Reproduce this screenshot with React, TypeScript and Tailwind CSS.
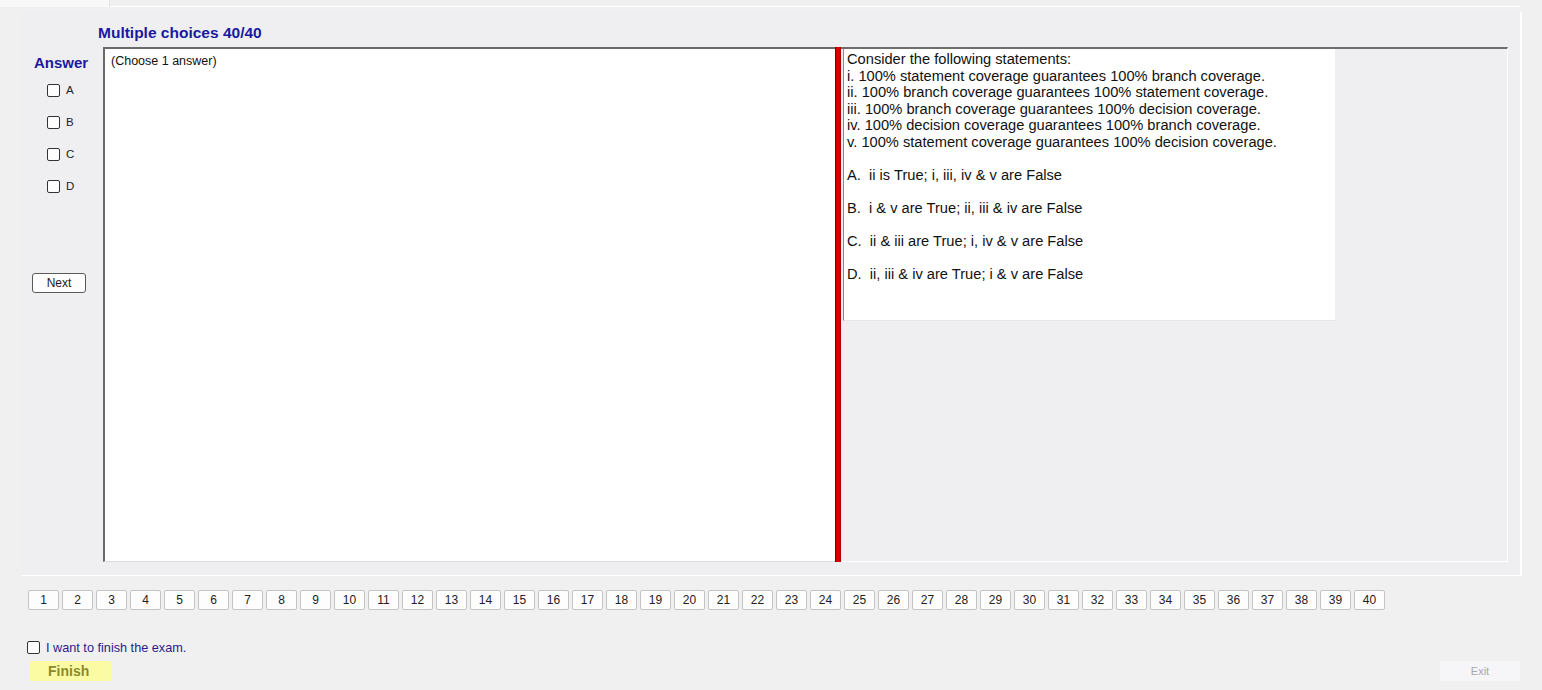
import React from "react";

const statements = [
  "Consider the following statements:",
  "i. 100% statement coverage guarantees 100% branch coverage.",
  "ii. 100% branch coverage guarantees 100% statement coverage.",
  "iii. 100% branch coverage guarantees 100% decision coverage.",
  "iv. 100% decision coverage guarantees 100% branch coverage.",
  "v. 100% statement coverage guarantees 100% decision coverage.",
];

const options = [
  "A.  ii is True; i, iii, iv & v are False",
  "B.  i & v are True; ii, iii & iv are False",
  "C.  ii & iii are True; i, iv & v are False",
  "D.  ii, iii & iv are True; i & v are False",
];

function Box() {
  return <span className="block w-[13px] h-[13px] bg-white border border-[#333333] rounded-[2px] shrink-0" />;
}

export default function App() {
  const pages = Array.from({ length: 40 }, (_, i) => i + 1);
  return (
    <div className="w-[1542px] h-[690px] bg-[#f0f0f0] flex flex-col overflow-hidden font-['Liberation_Sans',Arial,sans-serif] text-black">
      {/* top strip */}
      <div className="h-[12px] flex items-start">
        <div className="w-[110px] h-[7px] bg-[#f8f8f8] border-r border-[#e2e2e2]" />
        <div className="w-[1410px] h-[7px] border-b border-white" />
      </div>

      {/* main panel */}
      <div className="ml-[22px] w-[1500px] h-[564px] bg-[#efeff2] border-r-2 border-b border-white flex flex-col">
        <div className="h-[35px] pl-[76px] pt-[11px] text-[15.5px] leading-[20px] font-bold text-[#1a1aa0]">
          Multiple choices 40/40
        </div>
        <div className="flex h-[515px]">
          {/* left column */}
          <div className="w-[81px] flex flex-col">
            <div className="mt-[7px] pl-[12px] text-[15px] leading-[18px] font-bold text-[#1a1aa0]">Answer</div>
            <div className="mt-[12px] flex flex-col">
              {["A", "B", "C", "D"].map((l) => (
                <div key={l} className="h-[32px] flex items-start pl-[25px]">
                  <Box />
                  <span className="ml-[6px] text-[11.5px] leading-[13px] text-[#222]">{l}</span>
                </div>
              ))}
            </div>
            <div className="mt-[61px] ml-[10px] w-[54px] h-[20px] bg-[#fdfdfd] border border-[#5a5a5a] rounded-[3px] flex items-center justify-center text-[12px] text-[#222]">
              Next
            </div>
          </div>

          {/* question box */}
          <div className="w-[732px] h-[515px] bg-white border-l-2 border-t-2 border-l-[#6a6a6a] border-t-[#6a6a6a] border-b border-b-[#dcdcdc] pt-[5px] pl-[6px] text-[12.5px] leading-[15px] text-[#111]">
            (Choose 1 answer)
          </div>

          {/* splitter */}
          <div className="w-[6px] h-[515px] bg-[#d60000] border-l border-r border-l-[#7a0000] border-r-[#b00000]" />

          {/* right area */}
          <div className="w-[667px] h-[515px] border-t-2 border-t-[#6e6e6e] border-r border-r-white border-b border-b-white flex items-start">
            <div className="ml-[2px] w-[492px] h-[272px] bg-white border-l border-[#8a8a8a] border-b border-b-[#e6e6ea] pl-[3px] pt-[2px] text-[14.67px] leading-[16.6px] text-[#111]">
              {statements.map((s) => (
                <div key={s} className="whitespace-pre">{s}</div>
              ))}
              {options.map((o) => (
                <div key={o} className="mt-[16.5px] whitespace-pre">{o}</div>
              ))}
            </div>
          </div>
        </div>
      </div>

      {/* page buttons */}
      <div className="mt-[14px] pl-[28px] flex gap-[3px]">
        {pages.map((p) => (
          <div
            key={p}
            className="w-[31px] h-[20px] bg-[#fdfdfd] border border-[#c4c4c4] rounded-[2px] flex items-center justify-center text-[12px] text-[#222]"
          >
            {p}
          </div>
        ))}
      </div>

      {/* finish */}
      <div className="mt-[30px] pl-[27px] flex items-center h-[14px]">
        <Box />
        <span className="ml-[6px] text-[12.7px] leading-[14px] text-[#2a1c8c] mt-[2px]">I want to finish the exam.</span>
      </div>
      <div className="mt-[7px] flex items-center">
        <div className="ml-[30px] w-[81px] h-[20px] bg-[#fbfba4] pl-[18px] text-[14px] leading-[20px] font-bold text-[#8a8a2c]">
          Finish
        </div>
        <div className="ml-[1329px] w-[80px] h-[20px] bg-[#f6f6f9] flex items-center justify-center text-[11px] text-[#a8a8a8]">
          Exit
        </div>
      </div>
    </div>
  );
}
